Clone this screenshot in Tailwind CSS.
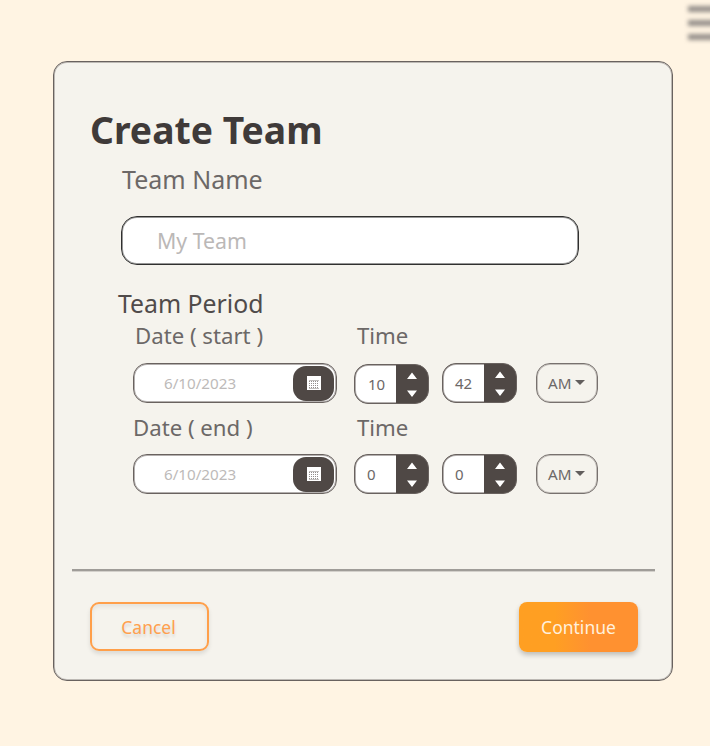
<!DOCTYPE html>
<html lang="en">
<head>
<meta charset="utf-8">
<title>Create Team</title>
<script src="https://cdn.jsdelivr.net/npm/@tailwindcss/browser@4"></script>
</head>
<body class="relative h-[746px] w-[710px] overflow-hidden bg-[#fff4e3] pl-[53px] pt-[61px] font-['Noto_Sans','Open_Sans',sans-serif] text-[#6c6867]">
<!-- Menu button -->
<div class="absolute left-[688px] top-[6px] flex w-[40px] flex-col gap-[8px] blur-[2px]">
  <i class="h-[6px] bg-[#96908b]"></i><i class="h-[6px] bg-[#96908b]"></i><i class="h-[6px] bg-[#96908b]"></i>
</div>
<main class="flex h-[620px] w-[620px] flex-col whitespace-nowrap rounded-[14px] border border-[#69625f] shadow-[inset_0_0_0_1px_#69625f66] bg-[#f5f3ed]">
  <h1 class="mt-[47px] h-[42px] pl-[36px] text-[37.3px] font-bold leading-[42px] text-[#3f3a39]">Create Team</h1>
  <label class="mt-[12px] h-[32px] pl-[68px] text-[25px] leading-[32px]">Team Name</label>
  <div class="ml-[67px] mt-[21px] flex h-[49px] w-[458px] items-center rounded-[16px] border border-[#30302f] bg-white pl-[35px] text-[21.3px] text-[#bbb8b7] shadow-[inset_0_0_0_1px_#30302f80]">My Team</div>
  <h2 class="mt-[22px] h-[32px] pl-[64px] text-[24.8px] leading-[32px] text-[#504b4a]">Team Period</h2>
  <div class="mt-px flex h-[32px] text-[22.2px] leading-[32px]"><span class="ml-[81px] w-[222px]">Date ( start )</span><span>Time</span></div>
  <div class="mt-[11px] flex h-[41px] items-start pl-[79px]">
    <div class="flex h-[40px] w-[204px] items-center justify-between rounded-[14px] border border-[#69625f] bg-white pl-[30px] pr-[2px] text-[15.2px] text-[#bdbab9] shadow-[inset_0_0_0_1px_#69625f80]"><span>6/10/2023</span>
      <span class="flex h-[35px] w-[41px] items-center justify-center rounded-[13px] bg-[#4f4845]"><svg width="14" height="14" viewBox="0 0 14 14"><path fill="#fff" d="M0 0h14v14H0z"/><path stroke="#948f8d" stroke-width="1" stroke-dasharray="1 1" d="M2 5.5h10M2 7.5h10M2 9.5h10M2 11.5h10"/><path stroke="#c2bfbd" d="M2 4.5h10M2 12.5h10"/></svg></span></div>
    <div class="ml-[17px] mt-px flex h-[40px] w-[75px] overflow-hidden rounded-[14px] border-[1.5px] border-[#69625f] bg-[#4f4845] text-[15px]"><span class="flex w-[41px] items-center rounded-l-[13px] bg-white pl-[13px] shadow-[inset_1px_0_0_#69625f80,inset_0_1px_0_#69625f80,inset_0_-1px_0_#69625f80]">10</span><svg class="flex-1" viewBox="0 0 32 38"><path fill="#fff" d="M11 14l5-6.500 5 6.500zM11 25.500h10l-5 6.500z"/></svg></div>
    <div class="ml-[13px] flex h-[40px] w-[75px] overflow-hidden rounded-[14px] border-[1.5px] border-[#69625f] bg-[#4f4845] text-[15px]"><span class="flex w-[41px] items-center rounded-l-[13px] bg-white pl-[12px] shadow-[inset_1px_0_0_#69625f80,inset_0_1px_0_#69625f80,inset_0_-1px_0_#69625f80]">42</span><svg class="flex-1" viewBox="0 0 32 38"><path fill="#fff" d="M11 14l5-6.500 5 6.500zM11 25.500h10l-5 6.500z"/></svg></div>
    <div class="ml-[19px] flex h-[40px] w-[62px] items-center rounded-[14px] border border-[#77716e] pl-[11px] text-[15.2px] shadow-[inset_0_0_0_1px_#77716e66]">AM<svg class="ml-[4px]" width="10" height="6" viewBox="0 0 10 6"><path fill="#625e5d" d="M0 0h10L5 5z"/></svg></div>
  </div>
  <div class="mt-[8px] flex h-[32px] text-[22.2px] leading-[32px]"><span class="ml-[79px] w-[224px]">Date ( end )</span><span>Time</span></div>
  <div class="mt-[10px] flex h-[41px] items-start pl-[79px]">
    <div class="flex h-[40px] w-[204px] items-center justify-between rounded-[14px] border border-[#69625f] bg-white pl-[30px] pr-[2px] text-[15.2px] text-[#bdbab9] shadow-[inset_0_0_0_1px_#69625f80]"><span>6/10/2023</span>
      <span class="flex h-[35px] w-[41px] items-center justify-center rounded-[13px] bg-[#4f4845]"><svg width="14" height="14" viewBox="0 0 14 14"><path fill="#fff" d="M0 0h14v14H0z"/><path stroke="#948f8d" stroke-width="1" stroke-dasharray="1 1" d="M2 5.5h10M2 7.5h10M2 9.5h10M2 11.5h10"/><path stroke="#c2bfbd" d="M2 4.5h10M2 12.5h10"/></svg></span></div>
    <div class="ml-[17px] flex h-[40px] w-[75px] overflow-hidden rounded-[14px] border-[1.5px] border-[#69625f] bg-[#4f4845] text-[15px]"><span class="flex w-[41px] items-center rounded-l-[13px] bg-white pl-[12px] shadow-[inset_1px_0_0_#69625f80,inset_0_1px_0_#69625f80,inset_0_-1px_0_#69625f80]">0</span><svg class="flex-1" viewBox="0 0 32 38"><path fill="#fff" d="M11 14l5-6.500 5 6.500zM11 25.500h10l-5 6.500z"/></svg></div>
    <div class="ml-[13px] flex h-[40px] w-[75px] overflow-hidden rounded-[14px] border-[1.5px] border-[#69625f] bg-[#4f4845] text-[15px]"><span class="flex w-[41px] items-center rounded-l-[13px] bg-white pl-[12px] shadow-[inset_1px_0_0_#69625f80,inset_0_1px_0_#69625f80,inset_0_-1px_0_#69625f80]">0</span><svg class="flex-1" viewBox="0 0 32 38"><path fill="#fff" d="M11 14l5-6.500 5 6.500zM11 25.500h10l-5 6.500z"/></svg></div>
    <div class="ml-[19px] flex h-[40px] w-[62px] items-center rounded-[14px] border border-[#77716e] pl-[11px] text-[15.2px] shadow-[inset_0_0_0_1px_#77716e66]">AM<svg class="ml-[4px]" width="10" height="6" viewBox="0 0 10 6"><path fill="#625e5d" d="M0 0h10L5 5z"/></svg></div>
  </div>
  <hr class="ml-[18px] mt-[74px] h-[2px] w-[583px] border-0 bg-[#9f9c98] shadow-[0_1px_0_#9f9c9866]">
  <div class="mt-[31px] flex items-start justify-between pl-[36px] pr-[34px] text-[17.5px]">
    <button class="h-[49px] w-[119px] rounded-[9px] border-2 border-[#ff9f4a] pr-[2px] pt-px text-[#ff9f4e] shadow-[0_3px_4px_#0000001a,inset_0_3px_4px_#00000010] text-shadow-[0_3px_3px_#0000001f]">Cancel</button>
    <button class="h-[50px] w-[119px] rounded-[8px] bg-linear-to-r from-[#ff9f22] from-30% to-[#ff9130] to-60% text-[#fff0dc] shadow-[0_3px_5px_#00000038]">Continue</button>
  </div>
</main>
</body>
</html>
